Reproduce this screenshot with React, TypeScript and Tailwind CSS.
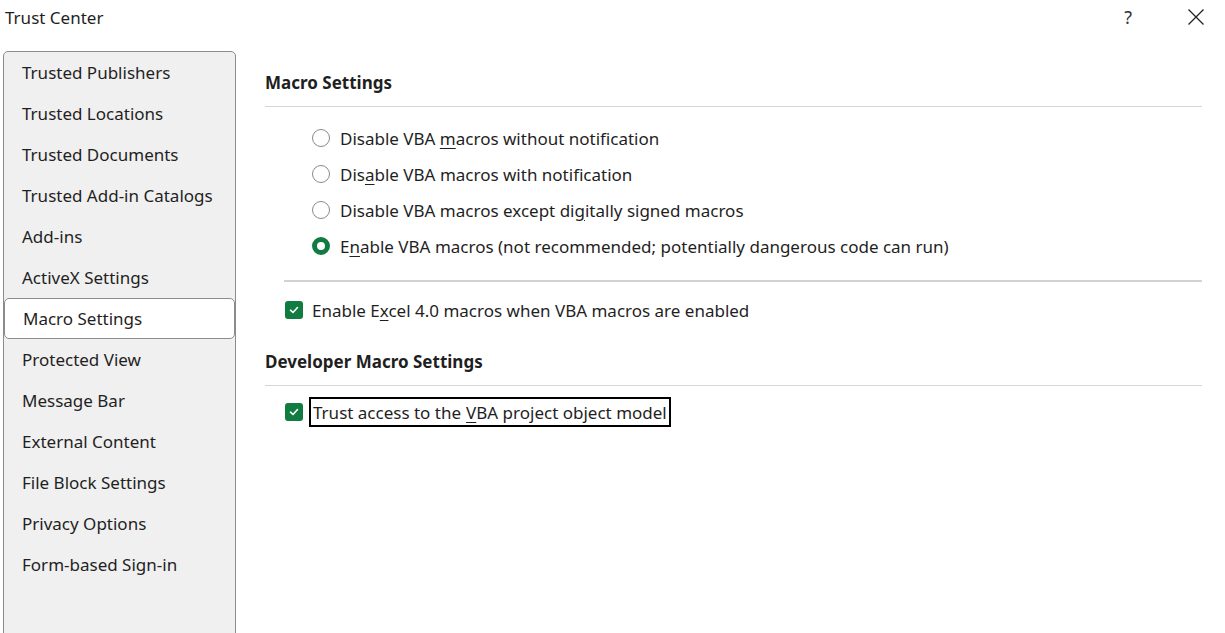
const navItems = [
    'Trusted Publishers',
    'Trusted Locations',
    'Trusted Documents',
    'Trusted Add-in Catalogs',
    'Add-ins',
    'ActiveX Settings',
    'Macro Settings',
    'Protected View',
    'Message Bar',
    'External Content',
    'File Block Settings',
    'Privacy Options',
    'Form-based Sign-in',
];

function Radio({ checked }: { checked?: boolean }) {
    return checked ? (
        <span className="w-[18px] h-[18px] rounded-full border-[5px] border-[#107c41] bg-white shrink-0" />
    ) : (
        <span className="w-[18px] h-[18px] rounded-full border border-[#8a8a8a] bg-white shrink-0" />
    );
}

function Check() {
    return (
        <span className="w-[18px] h-[18px] rounded-[3px] bg-[#107c41] flex items-center justify-center shrink-0">
            <svg width="12" height="12" viewBox="0 0 12 12" fill="none">
                <path d="M2.5 6.2 L5 8.5 L9.5 3.5" stroke="white" strokeWidth="1.6" strokeLinecap="round" strokeLinejoin="round" />
            </svg>
        </span>
    );
}

export default function App() {
    return (
        <div className="w-[1225px] h-[633px] bg-white overflow-hidden flex flex-col text-[#1f1f1f] font-['Noto_Sans',sans-serif] text-[17px]">
            {/* Title bar */}
            <div className="h-[51px] shrink-0 flex items-start">
                <span className="pl-[5px] pt-[6px] text-[17px] leading-[24px]">Trust Center</span>
                <div className="ml-auto flex items-start">
                    <span className="pt-[5px] mr-[56px] text-[18px] leading-[24px] text-[#333]">?</span>
                    <svg width="16" height="16" viewBox="0 0 16 16" className="mt-[9px] mr-[21px]">
                        <path d="M0.5 0.5 L15.5 15.5 M15.5 0.5 L0.5 15.5" stroke="#222" strokeWidth="1.3" />
                    </svg>
                </div>
            </div>

            <div className="flex-1 flex min-h-0">
                {/* Sidebar */}
                <div className="ml-[3px] w-[233px] h-[600px] shrink-0 border border-[#8c8c8c] rounded-t-[5px] bg-[#f0f0f0] flex flex-col">
                    {navItems.map((item) => (
                        <div
                            key={item}
                            className={`h-[41px] shrink-0 flex items-center pl-[18px] leading-none ${item === 'Macro Settings' ? 'bg-white border border-[#8c8c8c] rounded-[5px] pl-[17px]' : ''}`}
                        >
                            {item}
                        </div>
                    ))}
                </div>

                {/* Content */}
                <div className="flex-1 flex flex-col pl-[29px] pr-[23px]">
                    <div className="pt-[20px] pb-[11px] font-bold leading-[24px]">Macro Settings</div>
                    <div className="h-px bg-[#d6d6d6]" />

                    <div className="flex flex-col pl-[47px] pt-[13px]">
                        {[
                            <>Disable VBA <u className="underline-offset-[3px]">m</u>acros without notification</>,
                            <>Dis<u className="underline-offset-[3px]">a</u>ble VBA macros with notification</>,
                            <>Disable VBA macros except di<u className="underline-offset-[3px]">g</u>itally signed macros</>,
                            <>E<u className="underline-offset-[3px]">n</u>able VBA macros (not recommended; potentially dangerous code can run)</>,
                        ].map((label, i) => (
                            <div key={i} className="h-[36px] flex items-center gap-[10px]">
                                <Radio checked={i === 3} />
                                <span className="leading-none">{label}</span>
                            </div>
                        ))}
                    </div>

                    <div className="ml-[19px] mt-[16px] h-[2px] bg-[#d2d2d2]" />

                    <div className="ml-[20px] mt-[14px] h-[28px] flex items-center gap-[9px]">
                        <Check />
                        <span className="leading-none">Enable E<u className="underline-offset-[3px]">x</u>cel 4.0 macros when VBA macros are enabled</span>
                    </div>

                    <div className="pt-[26px] pb-[11px] font-bold leading-[24px]">Developer Macro Settings</div>
                    <div className="h-px bg-[#d6d6d6]" />

                    <div className="ml-[20px] mt-[11px] flex items-center gap-[6px]">
                        <Check />
                        <span className="border-2 border-black h-[30px] px-[2px] flex items-center leading-none">
                            Trust access to the <u className="underline-offset-[3px] ml-[5px]">V</u>BA project object model
                        </span>
                    </div>
                </div>
            </div>
        </div>
    );
}
